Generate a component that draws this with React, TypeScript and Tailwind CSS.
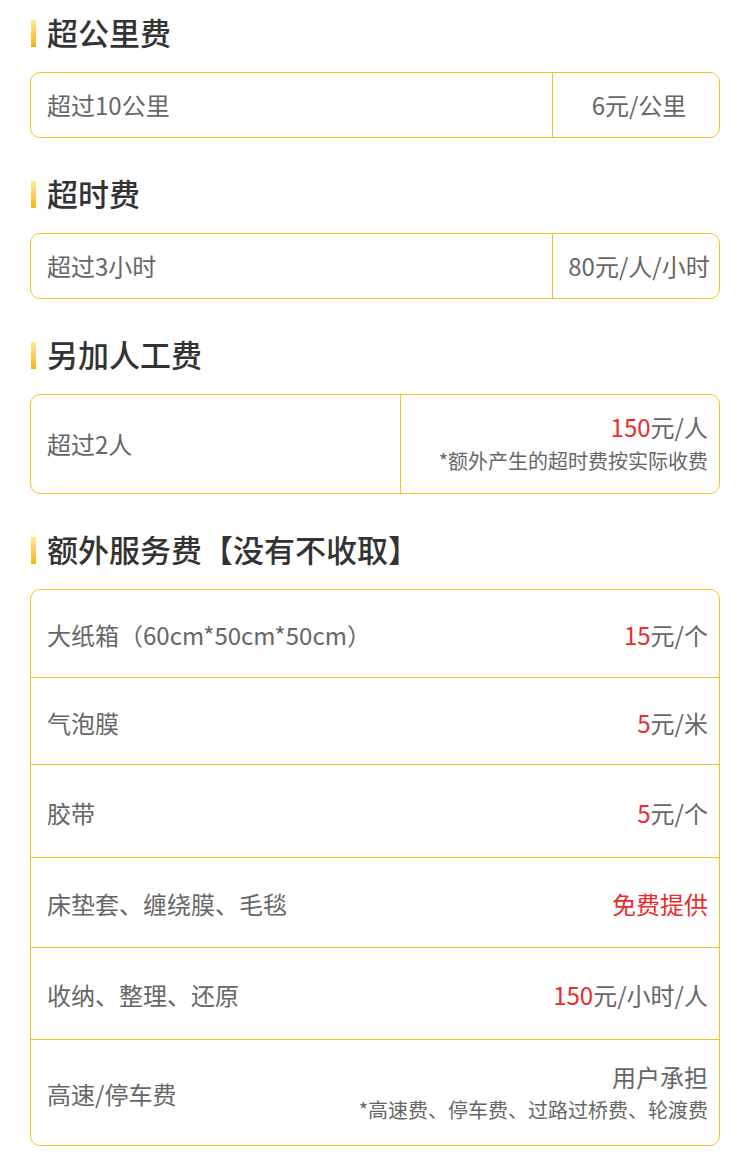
import React from "react";

const font = { fontFamily: '"Noto Sans CJK SC", "Noto Sans", sans-serif' };

function Heading({ title, first }: { title: string; first?: boolean }) {
  return (
    <div className={`flex items-center h-[40px] mb-[19px] pl-[1px] ${first ? "" : "mt-[36px]"}`}>
      <div className="w-[5px] h-[27px] bg-gradient-to-b from-[#fdeb8c] to-[#f5b300]" />
      <h2 className="ml-[11px] mb-[3px] text-[31px] leading-[40px] font-medium text-[#333]">{title}</h2>
    </div>
  );
}

function Price({ red, rest }: { red: string; rest: string }) {
  return (
    <span>
      <span className="text-[#ec2b2b]">{red}</span>
      {rest}
    </span>
  );
}

const extras: { name: string; h: string; value: React.ReactNode; note?: string }[] = [
  { name: "大纸箱（60cm*50cm*50cm）", h: "h-[88px]", value: <Price red="15" rest="元/个" /> },
  { name: "气泡膜", h: "h-[87px]", value: <Price red="5" rest="元/米" /> },
  { name: "胶带", h: "h-[93px]", value: <Price red="5" rest="元/个" /> },
  { name: "床垫套、缠绕膜、毛毯", h: "h-[90px]", value: <span className="text-[#ec2b2b]">免费提供</span> },
  { name: "收纳、整理、还原", h: "h-[92px]", value: <Price red="150" rest="元/小时/人" /> },
  { name: "高速/停车费", h: "h-[105px]", value: <span>用户承担</span>, note: "*高速费、停车费、过路过桥费、轮渡费" },
];

export default function App() {
  return (
    <div className="min-h-screen bg-white px-[30px] pt-[13px] pb-[28px] text-[#666]" style={font}>
      <Heading title="超公里费" first />
      <div className="flex h-[66px] rounded-[10px] border border-[#f6c323] text-[24px]">
        <div className="flex-1 flex items-center pl-[16px]">超过10公里</div>
        <div className="w-[167px] border-l border-[#f6c323] flex items-center justify-center pl-[6px]">6元/公里</div>
      </div>

      <Heading title="超时费" />
      <div className="flex h-[66px] rounded-[10px] border border-[#f6c323] text-[24px]">
        <div className="flex-1 flex items-center pl-[16px]">超过3小时</div>
        <div className="w-[167px] border-l border-[#f6c323] flex items-center justify-center pl-[6px]">80元/人/小时</div>
      </div>

      <Heading title="另加人工费" />
      <div className="flex h-[100px] rounded-[10px] border border-[#f6c323]">
        <div className="w-[369px] flex items-center pl-[16px] text-[24px]">超过2人</div>
        <div className="flex-1 border-l border-[#f6c323] flex flex-col justify-center items-end pr-[11px]">
          <div className="text-[24px] leading-[30px]">
            <Price red="150" rest="元/人" />
          </div>
          <div className="mt-[3px] text-[20px] leading-[32px]">*额外产生的超时费按实际收费</div>
        </div>
      </div>

      <Heading title="额外服务费【没有不收取】" />
      <div className="rounded-[10px] border border-[#f6c323]">
        {extras.map((row, i) => (
          <div
            key={row.name}
            className={`flex items-center justify-between pl-[16px] pr-[11px] ${row.h} ${i < extras.length - 1 ? "border-b border-[#f6c323]" : ""}`}
          >
            <div className="text-[24px] pt-[3px]">{row.name}</div>
            <div className="flex flex-col items-end">
              <div className="text-[24px] leading-[30px] pt-[3px]">{row.value}</div>
              {row.note && <div className="mt-[2px] text-[20px] leading-[32px]">{row.note}</div>}
            </div>
          </div>
        ))}
      </div>
    </div>
  );
}
